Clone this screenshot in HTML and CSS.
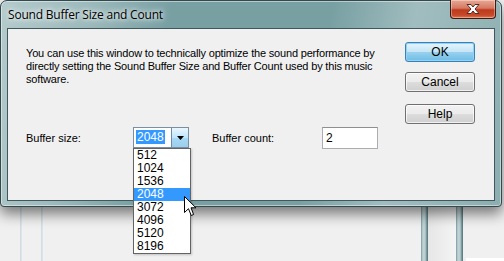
FILE: index.html
```html
<!DOCTYPE html>
<html>
<head>
<meta charset="utf-8">
<link rel="stylesheet" href="styles.css">
</head>
<body>
<div class="desktop">
  <div class="window">
    <div class="titlebar">
      <span class="title">Sound Buffer Size and Count</span>
      <div class="close">
        <svg width="18" height="12" viewBox="0 0 18 12"><path d="M3 1.5 L7 1.5 L9 4 L11 1.5 L15 1.5 L11 6 L15 10.5 L11 10.5 L9 8 L7 10.5 L3 10.5 L7 6 Z" fill="#fff" stroke="#5a2a20" stroke-width="1" stroke-linejoin="round"/></svg>
      </div>
    </div>
    <div class="client">
      <div class="main">
        <p class="desc">You can use this window to technically optimize the sound performance by<br>directly setting the Sound Buffer Size and Buffer Count used by this music<br>software.</p>
        <div class="fields">
          <span class="label label-size">Buffer size:</span>
          <div class="combo">
            <span class="combo-value"><span class="sel">2048</span></span>
            <span class="combo-btn"><svg width="7" height="4" viewBox="0 0 7 4"><path d="M0 0 H7 L3.5 4 Z" fill="#000"/></svg></span>
          </div>
          <span class="label label-count">Buffer count:</span>
          <div class="input">2</div>
        </div>
      </div>
      <div class="buttons">
        <div class="btn btn-default">OK</div>
        <div class="btn btn-cancel">Cancel</div>
        <div class="btn btn-help">Help</div>
      </div>
    </div>
  </div>
  <ul class="dropdown">
    <li>512</li>
    <li>1024</li>
    <li>1536</li>
    <li class="active">2048</li>
    <li>3072</li>
    <li>4096</li>
    <li>5120</li>
    <li>8196</li>
  </ul>
  <svg class="cursor" width="13" height="21" viewBox="0 0 13 21">
    <path d="M0.5 0.5 L0.5 16.5 L4.5 12.7 L7.2 19.5 L9.6 18.5 L7 11.8 L12 11.8 Z" fill="#fff" stroke="#000" stroke-width="1" stroke-linejoin="miter"/>
  </svg>
</div>
</body>
</html>
```
FILE: styles.css
```css
* { box-sizing: border-box; }
html, body { margin: 0; padding: 0; }
body {
  width: 504px;
  height: 261px;
  overflow: hidden;
  background: #f0f0f0;
}
.desktop {
  position: relative;
  width: 504px;
  height: 261px;
  background:
    linear-gradient(#ffffff, #ffffff) 466px 258px / 38px 3px no-repeat,
    linear-gradient(90deg, #dde6e8 0, #c9d6d9 1px, #eef2f3 2px) 20px 0 / 3px 261px no-repeat,
    linear-gradient(90deg, #dde6e8 0, #c9d6d9 1px, #eef2f3 2px) 41px 0 / 3px 261px no-repeat,
    linear-gradient(90deg, #6f8f93 0, #a9c1c4 1px, #c7d7d9 3px, #9db7ba 5px, #5f7f83 6px) 421px 0 / 7px 261px no-repeat,
    linear-gradient(90deg, #6f8f93 0, #a9c1c4 1px, #c7d7d9 3px, #9db7ba 5px, #5f7f83 6px) 456px 0 / 7px 261px no-repeat,
    linear-gradient(90deg, #e6e6e6, #f4f4f4) 428px 0 / 28px 261px no-repeat,
    #f0f0f0;
}
.window {
  position: absolute;
  left: 0;
  top: 0;
  width: 502px;
  height: 207px;
  border: 1px solid #33494c;
  border-radius: 7px 7px 4px 4px;
  background:
    linear-gradient(100deg, rgba(255,255,255,0.45) 0%, rgba(255,255,255,0.25) 18%, rgba(255,255,255,0) 32%, rgba(255,255,255,0) 62%, rgba(255,255,255,0.3) 78%, rgba(255,255,255,0.15) 100%),
    #78a0a3;
  box-shadow: 0 7px 14px rgba(0,0,0,0.5), inset 0 0 0 1px rgba(255,255,255,0.45);
  display: flex;
  flex-direction: column;
}
.titlebar {
  height: 27px;
  display: flex;
  justify-content: space-between;
  align-items: flex-start;
  flex-shrink: 0;
}
.title {
  font-family: "Open Sans", "Noto Sans", sans-serif;
  font-size: 12px;
  letter-spacing: -0.2px;
  color: #000;
  padding: 5px 0 0 7px;
  line-height: 18px;
  text-shadow: 0 0 8px #ffffff, 0 0 4px #ffffff;
}
.close {
  width: 46px;
  height: 19px;
  margin: -1px 5px 0 0;
  border: 1px solid #3f1a12;
  border-top: none;
  border-radius: 0 0 4px 4px;
  background: linear-gradient(#e9a794 0%, #d47a62 45%, #c0391c 55%, #c64a2a 85%, #e07a50 100%);
  box-shadow: inset 0 0 0 1px rgba(255,255,255,0.35);
  display: flex;
  align-items: center;
  justify-content: center;
}
.client {
  flex: 1;
  margin: 0 6px 5px 6px;
  border: 1px solid #40585b;
  background: #f0f0f0;
  display: flex;
  justify-content: space-between;
  font-family: "Liberation Sans", Arial, sans-serif;
  font-size: 11px;
  color: #000;
}
.main {
  padding: 18px 0 0 18px;
}
.desc {
  margin: 0;
  line-height: 13px;
  letter-spacing: -0.18px;
  white-space: nowrap;
}
.fields {
  display: flex;
  align-items: center;
  margin-top: 41px;
  height: 22px;
}
.label-size { width: 107px; }
.label-count { width: 110px; margin-left: 23px; }
.combo {
  width: 56px;
  height: 21px;
  border: 1px solid #7a8fa0;
  background: #fff;
  display: flex;
  align-self: flex-start;
}
.combo-value {
  flex: 1;
  padding: 2px 0 0 2px;
  font-size: 12px;
  line-height: 15px;
}
.sel {
  background: #3399ff;
  color: #fff;
  padding: 0 1px;
}
.combo-btn {
  width: 17px;
  border-left: 1px solid #6d8db0;
  background: linear-gradient(#eaf6fd, #bee6fd 50%, #a7d9f5 51%, #9ccfee);
  display: flex;
  align-items: center;
  justify-content: center;
}
.input {
  width: 56px;
  height: 22px;
  border: 1px solid #abadb3;
  border-top-color: #8e8f8f;
  background: #fff;
  padding: 3px 0 0 3px;
  font-size: 12px;
  line-height: 15px;
}
.buttons {
  display: flex;
  flex-direction: column;
  margin: 13px 19px 0 0;
}
.btn {
  width: 70px;
  height: 20px;
  border: 1px solid #707070;
  border-radius: 3px;
  background: linear-gradient(#f2f2f2 0%, #ebebeb 50%, #dddddd 51%, #cfcfcf 100%);
  box-shadow: inset 0 0 0 1px rgba(255,255,255,0.7);
  font-size: 12px;
  line-height: 18px;
  text-align: center;
}
.btn-default {
  border-color: #3c7fb1;
  background: linear-gradient(#e5f4fc 0%, #c4e5f6 50%, #98d1ef 51%, #6fbbe4 100%);
  box-shadow: inset 0 0 0 1px #8fd4fb;
}
.btn-cancel { margin-top: 10px; }
.btn-help { margin-top: 12px; }
.dropdown {
  position: absolute;
  left: 133px;
  top: 148px;
  width: 58px;
  height: 106px;
  margin: 0;
  padding: 0;
  list-style: none;
  background: #fff;
  border: 1px solid #646464;
  font-family: "Liberation Sans", Arial, sans-serif;
  font-size: 12px;
  box-shadow: 1px 1px 2px rgba(0,0,0,0.2);
}
.dropdown li {
  height: 13px;
  line-height: 13px;
  padding-left: 3px;
}
.dropdown li.active {
  background: #3399ff;
  color: #fff;
}
.cursor {
  position: absolute;
  left: 184px;
  top: 196px;
}
```
